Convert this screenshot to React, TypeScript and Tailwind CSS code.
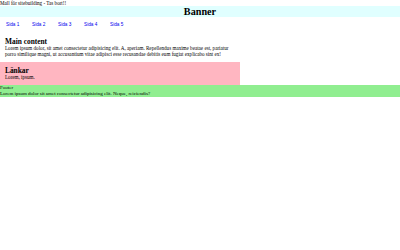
export default function App() {
  const links = ['Sida 1', 'Sida 2', 'Sida 3', 'Sida 4', 'Sida 5'];
  return (
    <div className="w-[400px] h-[250px] bg-white text-black font-['Liberation_Serif',serif] text-[5.1px] leading-[6px]">
      <div className="h-[6px]">Mall för sitebuilding - Tas bort!!</div>
      <header className="bg-[#e0ffff] h-[11px] flex items-center justify-center">
        <h1 className="text-[10.2px] font-bold leading-[11px]">Banner</h1>
      </header>
      <nav className="h-[16px] flex items-center gap-[12px] pl-[6px] font-['Liberation_Sans',sans-serif] text-[4.7px]">
        {links.map((l) => (
          <a key={l} href="#" className="text-[#0000ee] w-[14px] whitespace-nowrap">
            {l}
          </a>
        ))}
      </nav>
      <main className="px-[5px] pt-[5px] h-[29px]">
        <h2 className="text-[7.4px] font-bold leading-[7px]">Main content</h2>
        <p className="w-[226px]">
          Lorem ipsum dolor, sit amet consectetur adipisicing elit. A, aperiam. Repellendus maxime beatae est, pariatur porro similique magni, ut accusantium vitae adipisci esse recusandae debitis eum fugiat explicabo sint ex!
        </p>
      </main>
      <section className="bg-[#ffb6c1] w-[240px] h-[23px] px-[5px] pt-[5px]">
        <h2 className="text-[7.4px] font-bold leading-[7px]">Länkar</h2>
        <p>Lorem, ipsum.</p>
      </section>
      <footer className="bg-[#90ee90] h-[12px] text-[5px]">
        <div className="leading-[5.5px]">Footer</div>
        <div className="leading-[5.5px]">Lorem ipsum dolor sit amet consectetur adipisicing elit. Neque, reiciendis?</div>
      </footer>
    </div>
  );
}
